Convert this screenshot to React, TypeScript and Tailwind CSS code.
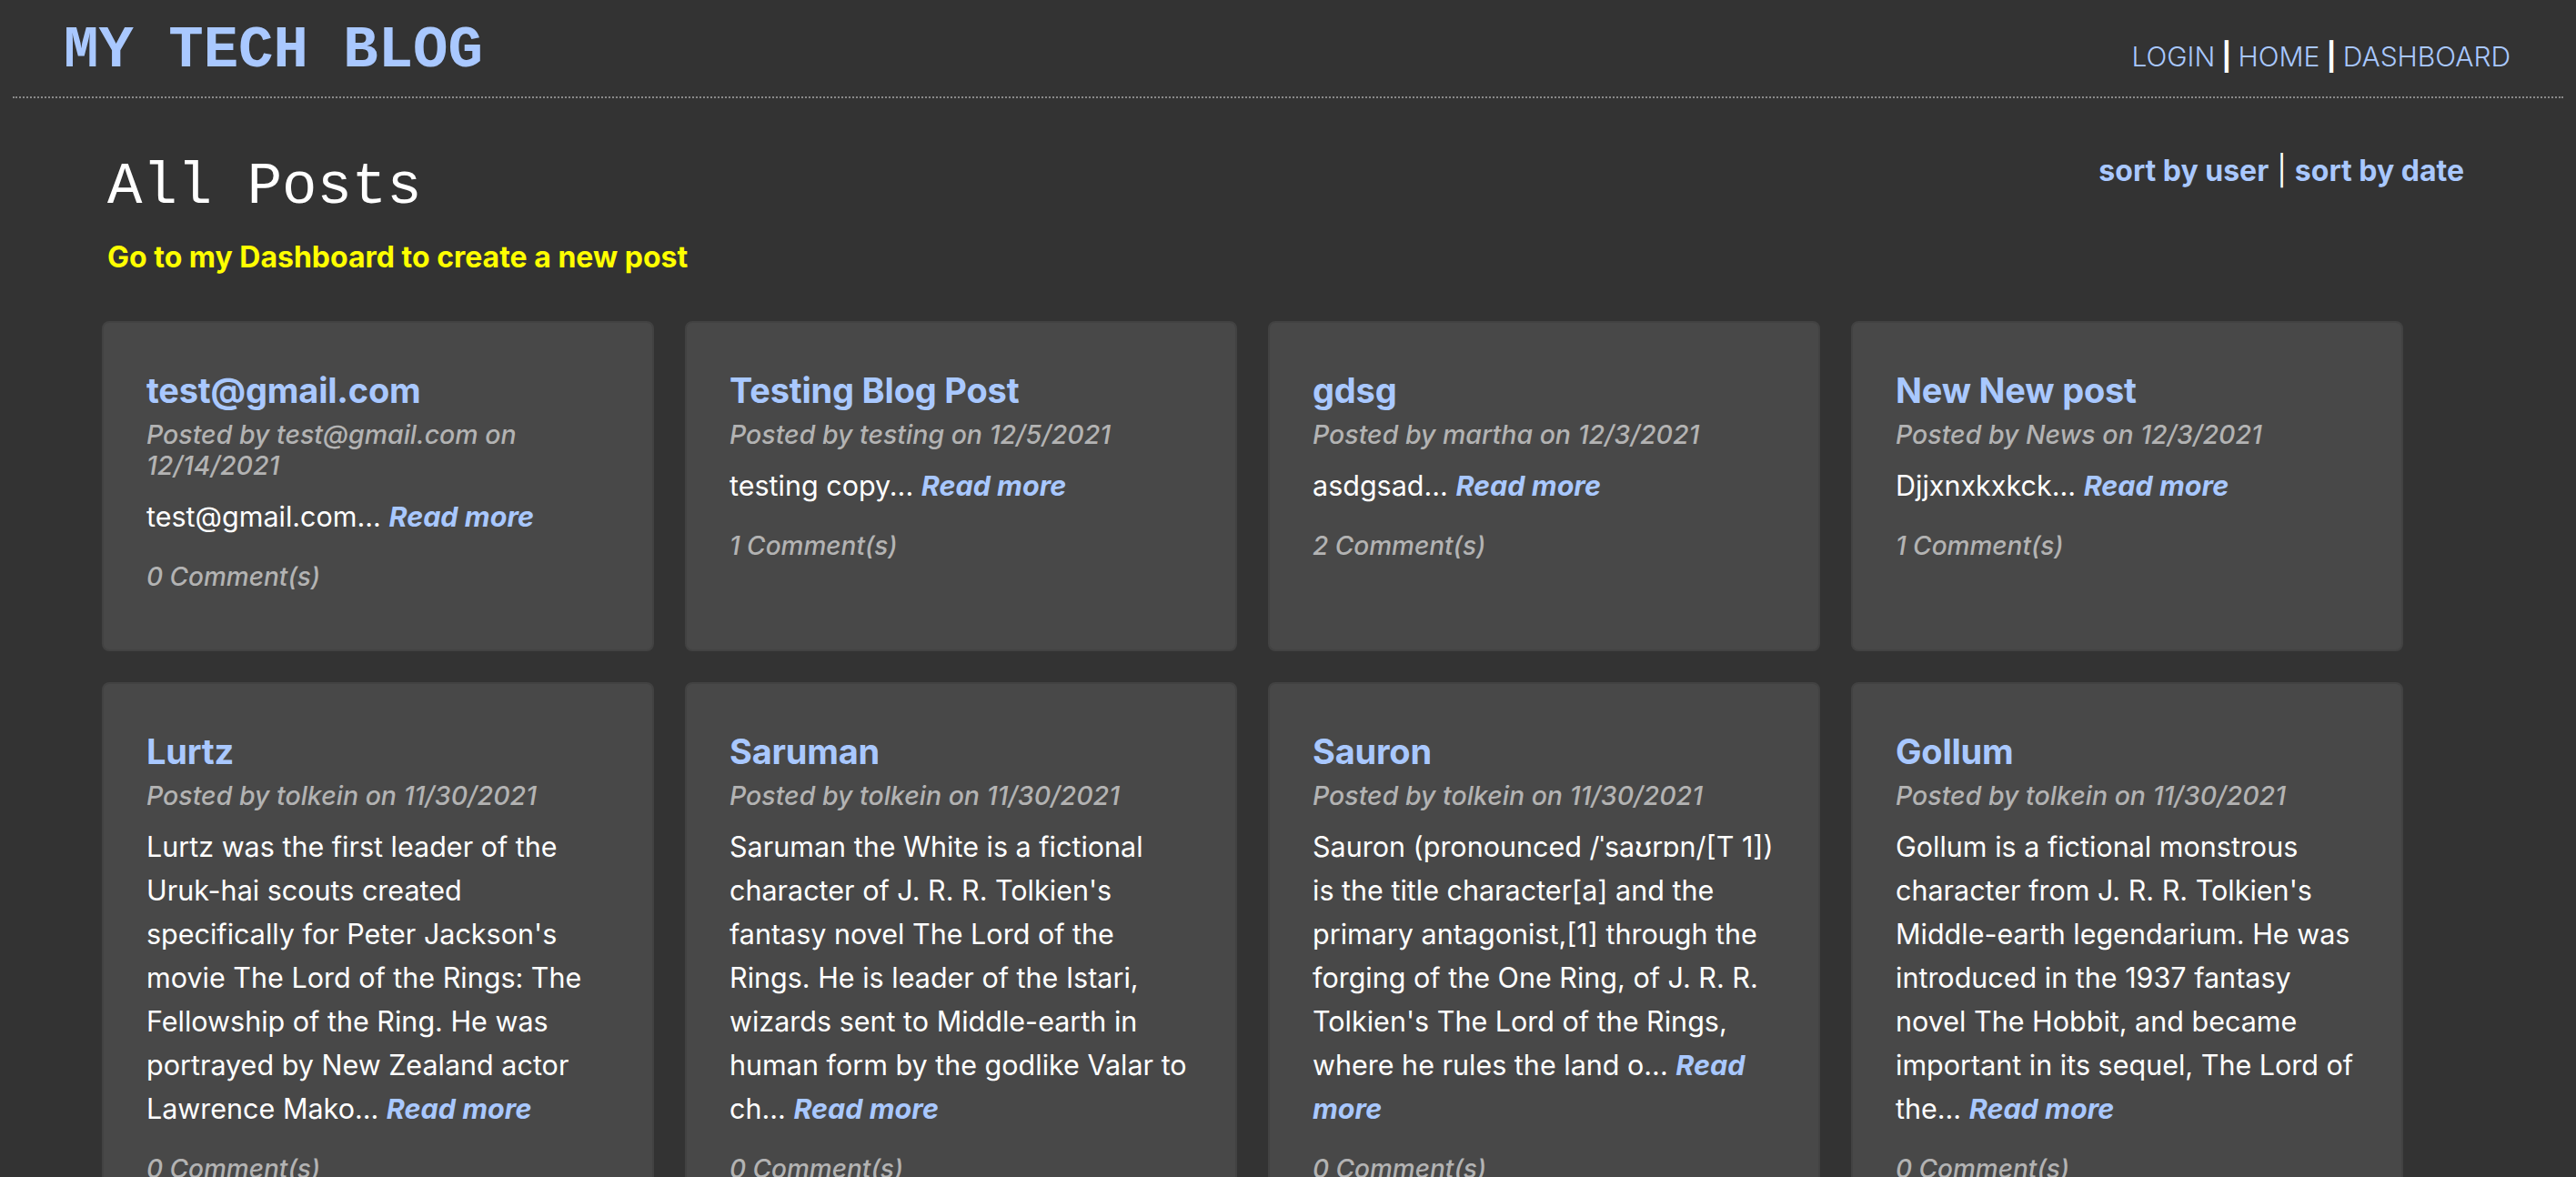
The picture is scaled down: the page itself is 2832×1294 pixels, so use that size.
import React from "react";

interface Post {
  title: string;
  author: string;
  date: string;
  excerpt: string;
  comments: number;
}

const posts: Post[] = [
  {
    title: "test@gmail.com",
    author: "test@gmail.com",
    date: "12/14/2021",
    excerpt: "test@gmail.com...",
    comments: 0,
  },
  {
    title: "Testing Blog Post",
    author: "testing",
    date: "12/5/2021",
    excerpt: "testing copy...",
    comments: 1,
  },
  {
    title: "gdsg",
    author: "martha",
    date: "12/3/2021",
    excerpt: "asdgsad...",
    comments: 2,
  },
  {
    title: "New New post",
    author: "News",
    date: "12/3/2021",
    excerpt: "Djjxnxkxkck...",
    comments: 1,
  },
  {
    title: "Lurtz",
    author: "tolkein",
    date: "11/30/2021",
    excerpt:
      "Lurtz was the first leader of the Uruk-hai scouts created specifically for Peter Jackson's movie The Lord of the Rings: The Fellowship of the Ring. He was portrayed by New Zealand actor Lawrence Mako...",
    comments: 0,
  },
  {
    title: "Saruman",
    author: "tolkein",
    date: "11/30/2021",
    excerpt:
      "Saruman the White is a fictional character of J. R. R. Tolkien's fantasy novel The Lord of the Rings. He is leader of the Istari, wizards sent to Middle-earth in human form by the godlike Valar to ch...",
    comments: 0,
  },
  {
    title: "Sauron",
    author: "tolkein",
    date: "11/30/2021",
    excerpt:
      "Sauron (pronounced /ˈsaʊrɒn/[T 1]) is the title character[a] and the primary antagonist,[1] through the forging of the One Ring, of J. R. R. Tolkien's The Lord of the Rings, where he rules the land o...",
    comments: 0,
  },
  {
    title: "Gollum",
    author: "tolkein",
    date: "11/30/2021",
    excerpt:
      "Gollum is a fictional monstrous character from J. R. R. Tolkien's Middle-earth legendarium. He was introduced in the 1937 fantasy novel The Hobbit, and became important in its sequel, The Lord of the...",
    comments: 0,
  },
];

function PostCard({ post }: { post: Post }) {
  return (
    <div className="w-[607px] rounded-[8px] border-2 border-[#424242] bg-[#484848] pl-[47px] pr-[42px] pt-[52px] pb-[63px]">
      <h2 className="text-[38px] leading-[44px] font-bold tracking-[-0.2px] text-[#a9c8ff]">
        {post.title}
      </h2>
      <p className="mt-[10px] text-[28.5px] leading-[34px] font-medium italic text-[#b3b3b3]">
        Posted by {post.author} on {post.date}
      </p>
      <p className="mt-[15px] text-[30.5px] leading-[48px] text-white">
        {post.excerpt}{" "}
        <a className="font-bold italic text-[#a9c8ff]">Read more</a>
      </p>
      <p className="mt-[25px] text-[28px] leading-[34px] font-medium italic text-[#b3b3b3]">
        {post.comments} Comment(s)
      </p>
    </div>
  );
}

export default function App() {
  return (
    <div className="min-h-screen bg-[#333333] font-['Inter','Noto_Sans',sans-serif]">
      <header className="mx-[14px] flex h-[108px] items-baseline justify-between border-b-2 border-dotted border-[#8a8a8a] pl-[56px] pr-[58px] pt-[8px]">
        <h1 className="font-['Liberation_Mono',monospace] text-[64px] font-bold text-[#a9c8ff]">
          MY TECH BLOG
        </h1>
        <nav className="text-[30px] font-light text-[#a9c8ff]">
          <a>LOGIN</a>
          <span className="font-bold text-white"> | </span>
          <a>HOME</a>
          <span className="font-bold text-white"> | </span>
          <a>DASHBOARD</a>
        </nav>
      </header>

      <main className="pl-[112px] pr-[123px] pt-[52px]">
        <div className="flex items-start justify-between">
          <h1 className="pl-[6px] pt-[8px] font-['Liberation_Mono',monospace] text-[64px] leading-[76px] text-white">
            All Posts
          </h1>
          <div className="pt-[4px] text-[32px] leading-[48px] font-bold text-[#a9c8ff]">
            <a>sort by user</a>
            <span className="font-normal text-white"> | </span>
            <a>sort by date</a>
          </div>
        </div>
        <p className="mt-[19px] pl-[6px] text-[32px] leading-[40px] font-bold text-[#ffff00]">
          Go to my Dashboard to create a new post
        </p>

        <div className="mt-[50px] flex flex-wrap gap-[34px]">
          {posts.map((post) => (
            <PostCard key={post.title} post={post} />
          ))}
        </div>
      </main>
    </div>
  );
}
